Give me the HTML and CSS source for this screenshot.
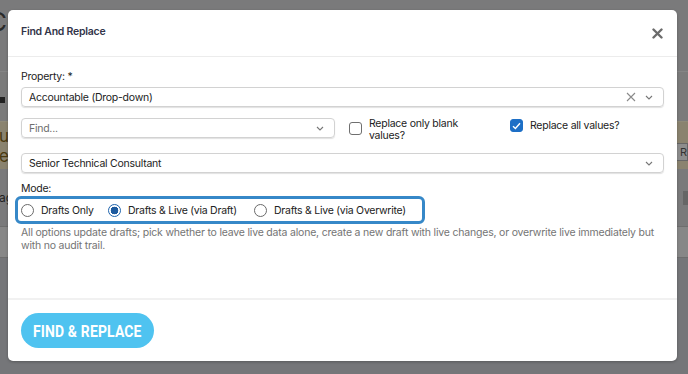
FILE: index.html
```html
<!DOCTYPE html>
<html>
<head>
<meta charset="utf-8">
<link rel="stylesheet" href="styles.css">
</head>
<body>
<div class="page">
  <div class="page-top"><span class="page-title">Co</span></div>
  <div class="page-row page-row-dot"><span class="dot"></span></div>
  <div class="page-band"><span>u</span><span>e</span><span class="re-btn">RE</span></div>
  <div class="page-row page-row-ag"><span>ag</span><span class="grey-box"></span></div>
  <div class="page-row page-row-light"></div>
  <div class="page-row page-row-dark"></div>
</div>

<div class="overlay">
  <div class="modal">
    <div class="modal-header">
      <h1 class="modal-title">Find And Replace</h1>
      <button class="close-btn" aria-label="Close">
        <svg width="11" height="11" viewBox="0 0 11 11"><path d="M1.5 1.5 L9.5 9.5 M9.5 1.5 L1.5 9.5" stroke="#6b6b6b" stroke-width="2.4" stroke-linecap="round"/></svg>
      </button>
    </div>
    <div class="modal-body">
      <div class="field-label">Property: *</div>
      <div class="select">
        <span class="select-value">Accountable (Drop-down)</span>
        <span class="select-icons">
          <svg class="clear-ico" width="10" height="10" viewBox="0 0 10 10"><path d="M1 1 L9 9 M9 1 L1 9" stroke="#8a8a8a" stroke-width="1.1"/></svg>
          <svg class="chev" width="8" height="5" viewBox="0 0 8 5"><path d="M1 1 L4 4 L7 1" stroke="#777" stroke-width="1.1" fill="none"/></svg>
        </span>
      </div>

      <div class="find-row">
        <div class="select select-find">
          <span class="select-placeholder">Find...</span>
          <svg class="chev" width="8" height="5" viewBox="0 0 8 5"><path d="M1 1 L4 4 L7 1" stroke="#777" stroke-width="1.1" fill="none"/></svg>
        </div>
        <label class="check check-blank">
          <span class="box"></span>
          <span class="check-text">Replace only blank<br>values?</span>
        </label>
        <label class="check check-all">
          <span class="box box-on">
            <svg width="9" height="8" viewBox="0 0 9 8"><path d="M1 4.2 L3.4 6.5 L8 1.3" stroke="#fff" stroke-width="1.4" fill="none"/></svg>
          </span>
          <span class="check-text">Replace all values?</span>
        </label>
      </div>

      <div class="select select-value-row">
        <span class="select-value">Senior Technical Consultant</span>
        <svg class="chev" width="8" height="5" viewBox="0 0 8 5"><path d="M1 1 L4 4 L7 1" stroke="#777" stroke-width="1.1" fill="none"/></svg>
      </div>

      <div class="field-label mode-label">Mode:</div>
      <div class="radio-group">
        <label class="radio r1"><span class="circle"></span>Drafts Only</label>
        <label class="radio r2"><span class="circle circle-on"></span>Drafts &amp; Live (via Draft)</label>
        <label class="radio r3"><span class="circle"></span>Drafts &amp; Live (via Overwrite)</label>
      </div>
      <p class="help">All options update drafts; pick whether to leave live data alone, create a new draft with live changes, or overwrite live immediately but with no audit trail.</p>
    </div>
    <div class="modal-footer">
      <button class="primary-btn"><span>FIND &amp; REPLACE</span></button>
    </div>
  </div>
</div>
</body>
</html>
```

FILE: styles.css
```css
* { box-sizing: border-box; }
html, body { margin: 0; padding: 0; }
body {
  width: 688px;
  height: 374px;
  overflow: hidden;
  background: #747578;
  font-family: Inter, "Noto Sans", "Liberation Sans", sans-serif;
  position: relative;
}

/* dimmed page behind the modal */
.page { display: flex; flex-direction: column; }
.page-top {
  height: 72px;
  background: #7a7a7b;
  border-bottom: 1px solid #858585;
  padding: 8px 0 0 0;
}
.page-title { font-size: 26px; color: #2a2a2a; margin-left: -12px; line-height: 28px; }
.page-row { display: flex; align-items: center; justify-content: space-between; }
.page-row-dot { height: 49px; background: #7b7b7b; }
.dot { width: 6px; height: 6px; background: #222; margin-left: -1px; margin-top: 6px; }
.page-band {
  height: 48px;
  background: #8a836f;
  display: flex;
  flex-direction: column;
  position: relative;
  font-size: 17px;
  color: #4a3a10;
  line-height: 20px;
  padding-top: 4px;
  border-top: 1px solid #8f8a78;
}
.page-band span { margin-left: -1px; }
.re-btn {
  position: absolute;
  right: 0;
  top: 21px;
  font-size: 11px !important;
  color: #333;
  background: #8d8d8d;
  border: 1px solid #666;
  padding: 1px 1px 1px 3px;
  line-height: 14px;
  width: 12px;
  overflow: hidden;
}
.page-row-ag { height: 58px; background: #7a7a7b; font-size: 12px; color: #222; border-bottom: 1px solid #6e6e6e; }
.page-row-ag span:first-child { margin-left: -1px; }
.grey-box { width: 5px; height: 14px; background: #666; margin-right: 0; }
.page-row-light { height: 30px; background: #878787; }
.page-row-dark { height: 120px; background: #757679; border-top: 1px solid #6d6d6d; }

/* overlay + modal */
.overlay { position: absolute; inset: 0; }
.modal {
  position: absolute;
  left: 8px;
  top: 10px;
  width: 669px;
  height: 351px;
  background: #fff;
  border-radius: 5px;
  display: flex;
  flex-direction: column;
  box-shadow: 0 1px 3px rgba(0,0,0,0.25);
}
.modal-header {
  height: 47px;
  border-bottom: 1px solid #ececec;
  display: flex;
  align-items: center;
  justify-content: space-between;
  padding: 0 14px 0 13px;
}
.modal-title {
  margin: 0;
  font-size: 10.5px;
  font-weight: 600;
  letter-spacing: -0.25px;
  color: #323449;
  position: relative;
  top: -2px;
}
.close-btn {
  background: none;
  border: 0;
  padding: 0;
  width: 11px;
  height: 11px;
  display: flex;
  cursor: pointer;
}

.modal-body {
  flex: 1;
  padding: 13px 13px 0 13px;
  color: #333;
  font-size: 10.5px;
  letter-spacing: -0.25px;
}
.field-label { font-size: 10.5px; line-height: 14px; color: #222; }
.select {
  height: 20px;
  border: 1px solid #d2d2d2;
  border-radius: 4px;
  box-shadow: 0 1px 1px rgba(0,0,0,0.12);
  display: flex;
  align-items: center;
  justify-content: space-between;
  padding: 0 10px 0 7px;
  font-size: 10.5px;
  color: #222;
  margin-top: 3px;
}
.select-icons { display: flex; align-items: center; gap: 9px; }
.chev { display: block; }
.select-placeholder { color: #6e6e6e; }

.find-row {
  display: flex;
  align-items: flex-start;
  margin-top: 11px;
  height: 28px;
}
.select-find { width: 314px; margin-top: 0; flex: none; }
.check { display: flex; align-items: flex-start; gap: 7px; font-size: 10.5px; color: #222; line-height: 11.5px; white-space: nowrap; }
.check-blank { margin-left: 14px; width: 161px; }
.check-blank .box { margin-top: 4px; }
.check-blank .check-text { margin-top: 0; }
.check-all { margin-top: 1px; }
.check-all .check-text { margin-top: 1px; }
.box {
  width: 13px;
  height: 13px;
  border: 1px solid #6f6f6f;
  border-radius: 3px;
  flex: none;
  background: #fff;
}
.box-on {
  background: #1d6fc6;
  border-color: #1d6fc6;
  display: flex;
  align-items: center;
  justify-content: center;
}

.select-value-row { margin-top: 7px; }

.mode-label { margin-top: 10px; line-height: 12px; }
.radio-group {
  display: flex;
  align-items: center;
  width: 410px;
  height: 28px;
  margin-left: -6px;
  margin-top: 1px;
  border: 3px solid #3688c8;
  border-radius: 6px;
  padding-left: 3px;
}
.radio {
  display: flex;
  align-items: center;
  gap: 7px;
  font-size: 10.5px;
  color: #222;
  white-space: nowrap;
  flex: none;
}
.r1 { width: 87px; }
.r2 { width: 146px; }
.circle {
  width: 13px;
  height: 13px;
  border: 1px solid #6a6a6a;
  border-radius: 50%;
  background: #fff;
  flex: none;
}
.circle-on {
  border: 1px solid #1f64ad;
  background: radial-gradient(circle, #1d5a9e 0 3.6px, #fff 4.1px);
}

.help {
  margin: 2px 0 0 0;
  font-size: 10.5px;
  line-height: 13px;
  color: #747474;
  letter-spacing: -0.2px;
}

.modal-footer {
  height: 63px;
  border-top: 2px solid #f1f1f1;
  padding: 13px 13px 0 13px;
}
.primary-btn {
  width: 133px;
  height: 35px;
  border: 0;
  border-radius: 18px;
  background: #4fc3f0;
  color: #fff;
  font-family: Roboto, "Liberation Sans", sans-serif;
  font-weight: 700;
  font-size: 17px;
  display: flex;
  align-items: center;
  justify-content: center;
  padding: 0;
  cursor: pointer;
}
.primary-btn span { display: inline-block; transform: scaleX(0.82); white-space: nowrap; letter-spacing: 0.2px; }
```
